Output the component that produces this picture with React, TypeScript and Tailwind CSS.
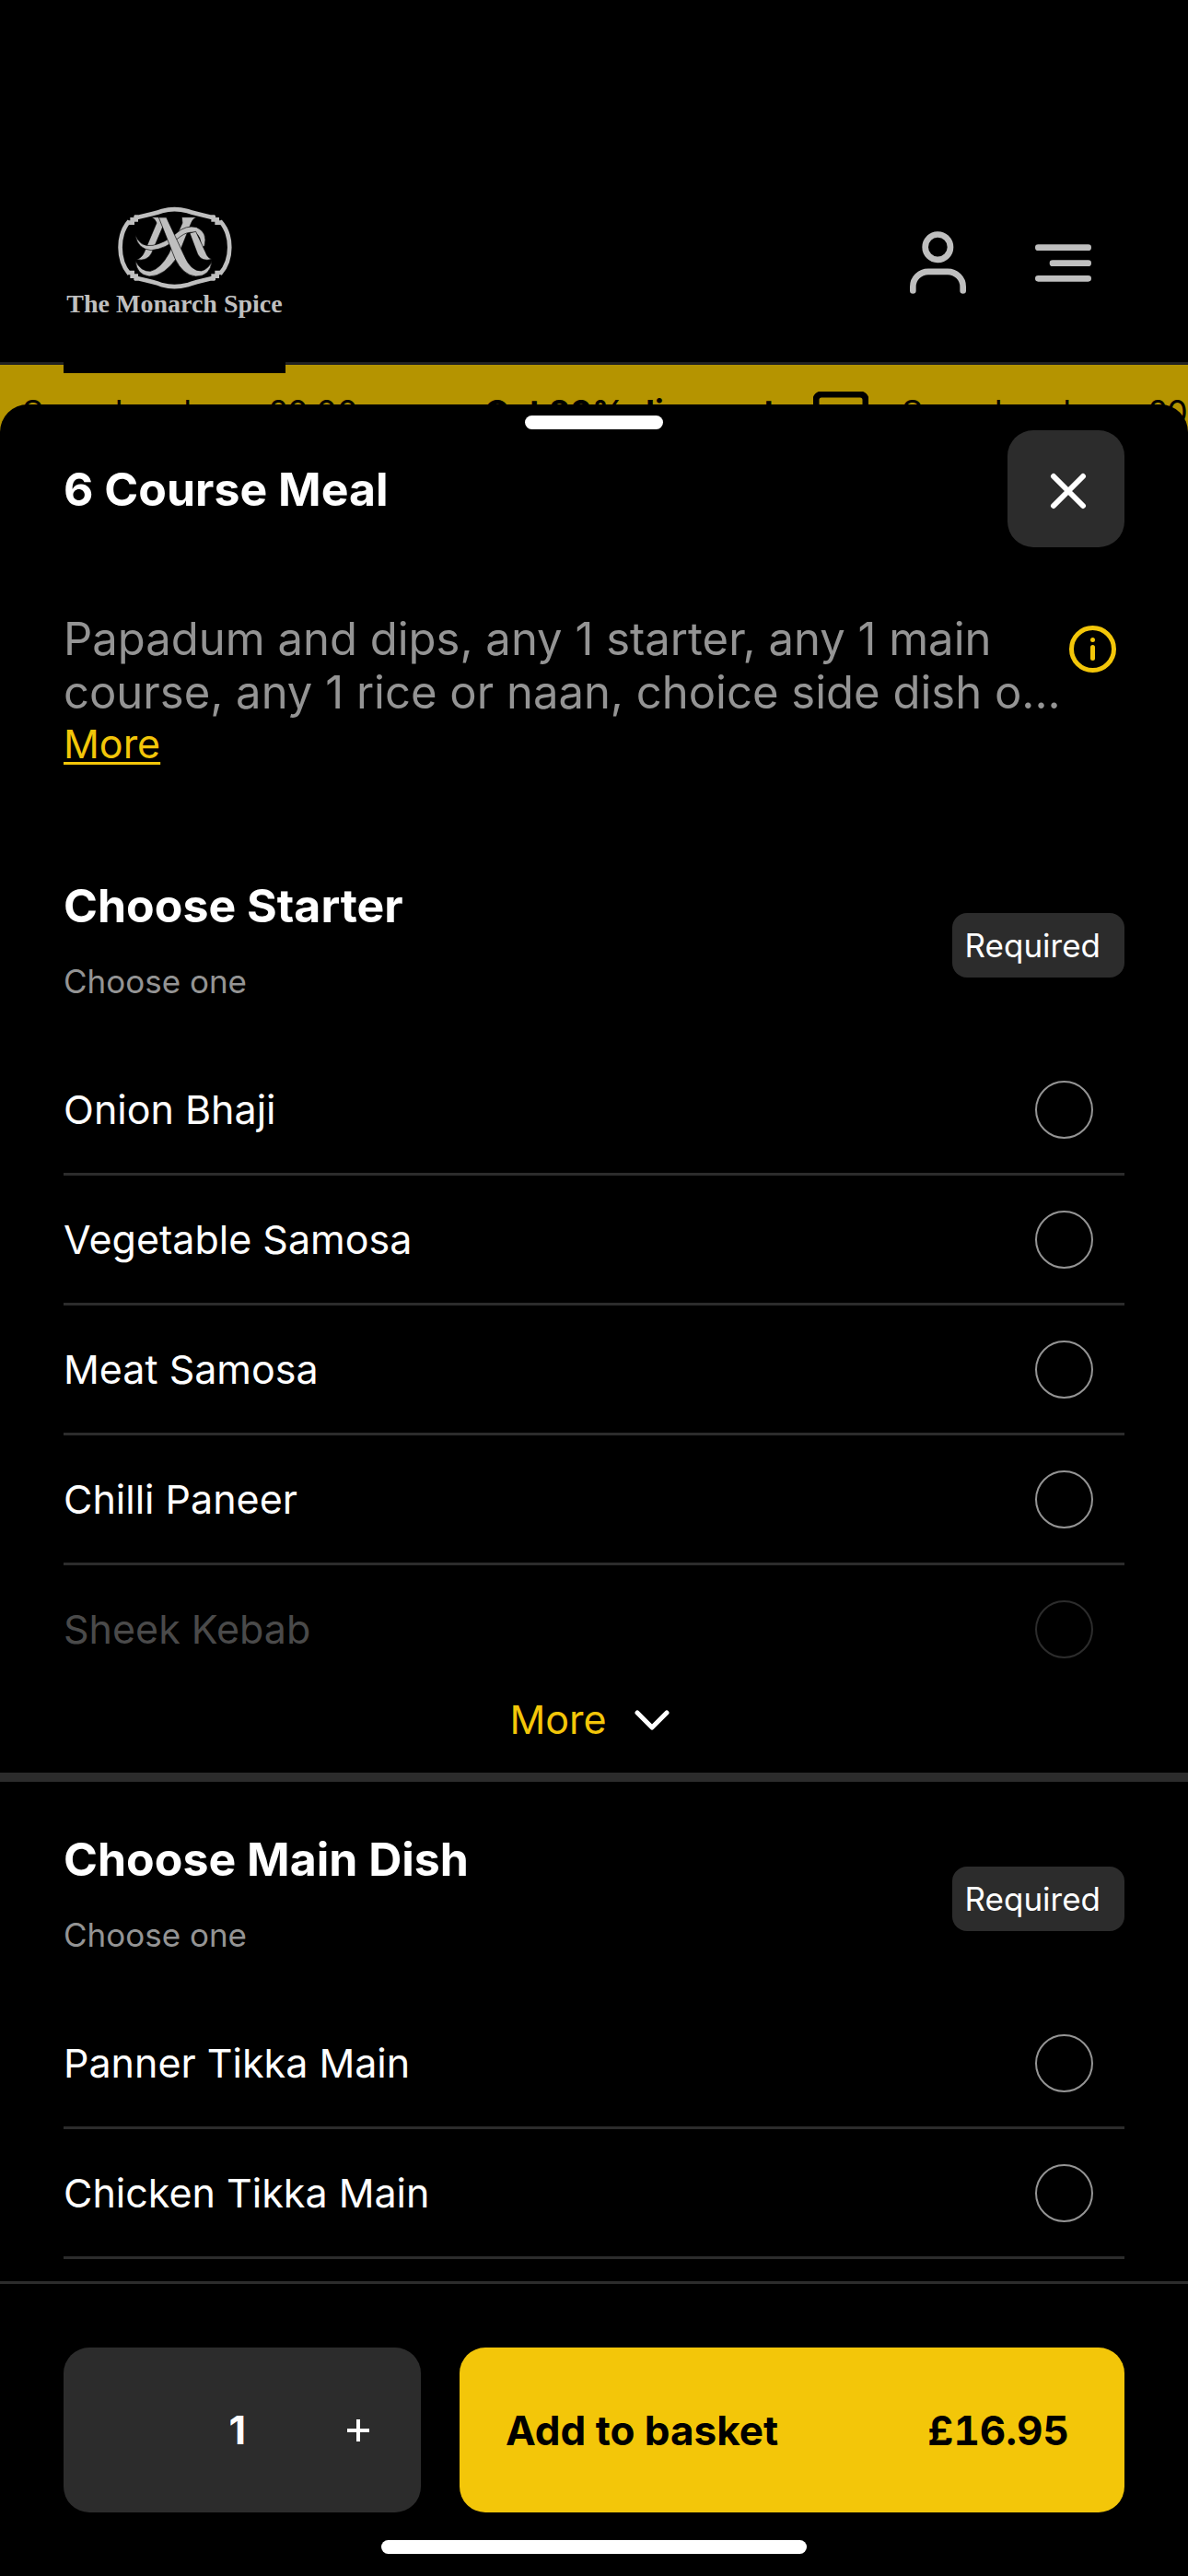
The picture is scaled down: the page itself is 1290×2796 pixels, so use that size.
import React, { useState } from 'react';

const starters = ['Onion Bhaji', 'Vegetable Samosa', 'Meat Samosa', 'Chilli Paneer', 'Sheek Kebab'];
const mains = ['Panner Tikka Main', 'Chicken Tikka Main'];

const Logo = () => (
  <a href="#home" className="relative z-10 -mb-3 flex h-[185px] w-[241px] flex-col items-center bg-black text-[#bfbfbf]">
    <svg viewBox="87 60 723 300" className="h-[100px] w-full" fill="none" aria-hidden="true">
      {/* frame */}
      <g stroke="currentColor" strokeWidth="14">
        <path d="M318 107H330Q385 95 408 87Q448 76 490 87Q515 95 568 107H580" />
        <path d="M318 307H330Q385 319 408 328Q448 339 490 328Q515 319 568 307H580" />
        <path d="M301 120C262 165 262 245 301 292" />
        <path d="M597 120C638 165 638 245 597 292" />
        <path d="M323 102V115H311V125H295" />
        <path d="M575 102V115H587V125H603" />
        <path d="M323 312V299H311V288H295" />
        <path d="M575 312V299H587V288H603" />
      </g>
      {/* monogram */}
      <g fill="currentColor" stroke="#000" strokeWidth="2">
        <path d="M372 107H424L416 125L374 224Q360 252 324 245Q342 240 350 221L390 126Q386 112 372 107Z" />
        <path d="M472 107H520Q506 114 502 128L460 234Q416 300 366 300Q324 294 322 250Q338 284 370 283Q402 276 430 226L474 126Z" />
        <path d="M322 166Q336 206 378 199Q420 190 456 158Q486 132 520 140Q558 156 546 202L533 206Q538 168 513 157Q488 154 468 170Q418 212 372 215Q326 210 322 166Z" />
        <path d="M498 159L518 154L550 222Q556 240 570 244Q538 254 524 228Z" />
        <path d="M397 108H422L480 232Q502 284 536 282Q560 276 570 250Q566 300 518 300Q476 296 450 242Z" />
      </g>
    </svg>
    <span className="-mt-1 whitespace-nowrap font-['Liberation_Serif',serif] text-[28px] font-bold leading-none">
      The Monarch Spice
    </span>
  </a>
);

const Promo = () => (
  <p className="flex shrink-0 items-start text-[36px] leading-[44px]">
    <span className="w-[266px]">Spend under</span>
    <span className="w-[236px]">£0.00</span>
    <strong className="w-[357px]">Get 20% discount</strong>
    <svg viewBox="0 0 60 60" className="size-[60px]" fill="none" stroke="currentColor" strokeWidth="7" aria-hidden="true">
      <rect x="3" y="3" width="54" height="54" rx="6" />
      <path d="M30 14V44M16 30H44" />
    </svg>
  </p>
);

type GroupProps = {
  title: string;
  name: string;
  items: string[];
  more?: boolean;
};

const OptionGroup: React.FC<GroupProps> = ({ title, name, items, more }) => (
  <section role="radiogroup" aria-labelledby={name}>
    <div className="flex items-center justify-between px-[69px]">
      <div>
        <h2 id={name} className="text-[50px] font-bold leading-[60px]">{title}</h2>
        <p className="mt-[30px] text-[35px] leading-[44px] text-[#949494]">Choose one</p>
      </div>
      <span className="mt-3 rounded-2xl bg-[#2c2c2c] pl-[14px] pr-[26px] text-[35px] leading-[70px]">Required</span>
    </div>
    <div className="mt-12 px-[69px]">
      {items.map((item, i) => {
        const faded = more && i === items.length - 1;
        return (
          <label
            key={item}
            className={`flex h-[141px] items-center justify-between border-b-3 pr-[34px] text-[43px] ${
              faded ? 'border-transparent text-[#4a4a4a]' : 'border-[#2c2c2c]'
            }`}
          >
            {item}
            <input
              type="radio"
              name={name}
              className={`size-[63px] appearance-none rounded-full border-2 checked:bg-[#f3c609] ${
                faded ? 'border-[#2c2c2c]' : 'border-[#949494]'
              }`}
            />
          </label>
        );
      })}
    </div>
    {more && (
      <div className="flex h-[94px] items-start justify-center border-b-10 border-[#2c2c2c] pr-2">
        <button type="button" className="flex h-[52px] items-center gap-7 text-[43px] text-[#f3c609]">
          More
          <svg viewBox="0 0 42 24" className="h-6 w-[42px] text-white" fill="none" stroke="currentColor" strokeWidth="5" strokeLinecap="round" strokeLinejoin="round" aria-hidden="true">
            <path d="M5 5L21 21L37 5" />
          </svg>
        </button>
      </div>
    )}
  </section>
);

const App: React.FC = () => {
  const [count, setCount] = useState(1);

  return (
    <div className="flex min-h-screen flex-col overflow-hidden bg-black font-[Inter,sans-serif] text-white">
      {/* Site header */}
      <header className="flex items-start justify-between border-b-3 border-[#222] pl-[69px] pr-[105px] pt-[220px]">
        <Logo />
        <nav className="mt-[31px] flex items-center gap-[75px] text-[#bfbfbf]">
          <button type="button" aria-label="Account">
            <svg viewBox="144 92 183 203" className="h-[68px] w-[61px]" fill="none" stroke="currentColor" strokeWidth="20" strokeLinecap="round">
              <circle cx="235" cy="143" r="41" />
              <path d="M154 285V272C154 245 176 223 204 223H267C295 223 317 245 317 272V285" />
            </svg>
          </button>
          <button type="button" aria-label="Menu">
            <svg viewBox="552 132 183 123" className="h-[41px] w-[61px]" fill="none" stroke="currentColor" strokeWidth="20" strokeLinecap="round">
              <path d="M562 143H725M609 194H725M562 244H725" />
            </svg>
          </button>
        </nav>
      </header>

      {/* Promo ticker */}
      <div className="flex h-[108px] gap-9 overflow-hidden bg-[#b59400] pl-6 pt-[29px] text-black">
        <Promo />
        <Promo />
      </div>

      {/* Item sheet */}
      <main className="relative -mt-[65px] flex grow flex-col rounded-t-[30px] bg-black pt-3">
        <div className="mx-auto h-[15px] w-[150px] rounded-full bg-white" />
        <div className="flex h-[129px] items-center justify-between px-[69px]">
          <h1 className="text-[50px] font-bold leading-[60px]">6 Course Meal</h1>
          <button type="button" aria-label="Close" className="flex size-[127px] items-center justify-center rounded-[28px] bg-[#2c2c2c] pl-1 pt-1">
            <svg viewBox="0 0 40 40" className="size-10" fill="none" stroke="currentColor" strokeWidth="6" strokeLinecap="round">
              <path d="M4 4L36 36M36 4L4 36" />
            </svg>
          </button>
        </div>

        <div className="mt-[70px] flex items-start justify-between pl-[69px] pr-[78px]">
          <div className="min-w-0 flex-1">
            <p className="text-[49px] leading-[58px] text-[#949494]">
              Papadum and dips, any 1 starter, any 1 main
              <br />
              course, any 1 rice or naan, choice side dish o...
            </p>
            <a href="#details" className="block text-[43px] leading-[52px] text-[#f3c609] underline decoration-3 underline-offset-4">
              More
            </a>
          </div>
          <button type="button" aria-label="Information" className="mt-[14px] text-[#f3c609]">
            <svg viewBox="0 0 102 102" className="size-[51px]" fill="none" stroke="currentColor" strokeWidth="10" strokeLinecap="round">
              <circle cx="51" cy="51" r="46" />
              <path d="M51 47V71" />
              <circle cx="51" cy="31" r="5" fill="currentColor" stroke="none" />
            </svg>
          </button>
        </div>

        <div className="mt-[120px]">
          <OptionGroup title="Choose Starter" name="starter" items={starters} more />
        </div>
        <div className="mt-[54px]">
          <OptionGroup title="Choose Main Dish" name="main" items={mains} />
        </div>

        {/* Basket bar */}
        <footer className="mt-auto border-t-3 border-[#2c2c2c] pb-6 pt-[69px]">
          <div className="flex gap-[42px] px-[69px]">
            <div className="flex h-[179px] w-[388px] shrink-0 items-center justify-end gap-[94px] rounded-[28px] bg-[#2c2c2c] pr-[40px]">
              <output className="text-[43px] font-bold">{count}</output>
              <button type="button" aria-label="Add one" className="p-4" onClick={() => setCount(count + 1)}>
                <svg viewBox="0 0 24 24" className="size-6" fill="none" stroke="currentColor" strokeWidth="4">
                  <path d="M12 0V24M0 12H24" />
                </svg>
              </button>
            </div>
            <button type="button" className="flex h-[179px] min-w-0 flex-1 items-center justify-between rounded-[28px] bg-[#f3c609] pl-[50px] pr-[60px] text-[44px] font-bold text-black">
              <span>Add to basket</span>
              <span className="tabular-nums">£16.95</span>
            </button>
          </div>
          <div className="mx-auto mt-[30px] h-[15px] w-[462px] rounded-full bg-white" />
        </footer>
      </main>
    </div>
  );
};

export default App;
